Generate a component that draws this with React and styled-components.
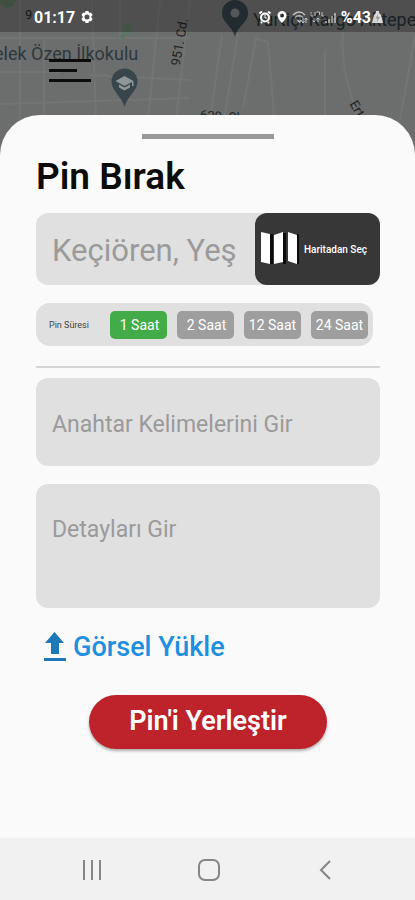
import React, { useState } from 'react';
import styled, { createGlobalStyle } from 'styled-components';

const GlobalStyle = createGlobalStyle`
  * {
    box-sizing: border-box;
  }

  body {
    margin: 0;
    background: #fafafa;
    font-family: Roboto, 'Noto Sans', sans-serif;
  }

  button,
  input,
  textarea {
    font-family: inherit;
  }

  button {
    border: 0;
    padding: 0;
    background: none;
    cursor: pointer;
  }
`;

const Screen = styled.div`
  display: flex;
  flex-direction: column;
  min-height: 100vh;
`;

const MapHeader = styled.header`
  position: relative;
  height: 160px;
  margin-bottom: -45px;
  overflow: hidden;
  background: #6c6e6d;
`;

const MapDrawing = styled.svg`
  position: absolute;
  top: 0;
  left: 0;
`;

const MapLabel = styled.span`
  position: absolute;
  top: ${(props) => props.$y}px;
  left: ${(props) => props.$x}px;
  color: ${(props) => props.$color || '#202224'};
  font-size: ${(props) => props.$size || 13}px;
  line-height: 20px;
  white-space: nowrap;
  transform: rotate(${(props) => props.$angle || 0}deg);
`;

const StatusBar = styled.div`
  position: relative;
  display: flex;
  align-items: center;
  justify-content: space-between;
  height: 32px;
  padding: 2px 32px 0 34px;
  background: rgba(0, 0, 0, 0.28);
  color: #fff;
  font-size: 16px;
  font-weight: 700;
`;

const StatusGroup = styled.div`
  display: flex;
  align-items: center;
  gap: ${(props) => props.$gap}px;
`;

const MenuButton = styled.button`
  position: relative;
  display: flex;
  flex-direction: column;
  gap: 7px;
  width: 42px;
  margin: 27px 0 0 49px;
`;

const MenuLine = styled.span`
  height: 3px;
  width: ${(props) => (props.$short ? '28px' : '100%')};
  background: #0c0c0c;
`;

const Sheet = styled.main`
  position: relative;
  flex: 1;
  display: flex;
  flex-direction: column;
  padding: 19px 35px 32px 36px;
  border-radius: 40px 40px 0 0;
  background: #fafafa;
`;

const Handle = styled.div`
  align-self: center;
  width: 132px;
  height: 5px;
  background: #999;
`;

const Title = styled.h1`
  margin: 16px 0 14px;
  color: #0c0c0c;
  font-size: 37px;
  font-weight: 600;
  line-height: 44px;
`;

const Location = styled.div`
  display: flex;
  height: 72px;
  border-radius: 12px;
  background: #e0e0e0;
`;

const LocationInput = styled.input`
  flex: 1;
  min-width: 0;
  padding: 2px 16px 0;
  border: 0;
  background: none;
  color: #222;
  font-size: 31px;

  &::placeholder {
    color: #9a9a9a;
    opacity: 1;
  }
`;

const MapButton = styled.button`
  display: flex;
  align-items: center;
  gap: 4px;
  width: 125px;
  padding-left: 5px;
  border-radius: 12px;
  background: #373737;
  color: #fff;
  font-size: 10px;
  font-weight: 500;
  white-space: nowrap;
`;

const Duration = styled.div`
  display: flex;
  align-items: center;
  gap: 10px;
  height: 43px;
  margin: 18px 7px 20px 0;
  padding: 0 5px 0 13px;
  border-radius: 14px;
  background: #e0e0e0;
`;

const DurationLabel = styled.span`
  flex: 1;
  color: #444;
  font-size: 9px;
  white-space: nowrap;
`;

const Chip = styled.button`
  width: 57px;
  height: 28px;
  padding-left: ${(props) => (props.$indent ? 2 : 0)}px;
  border-radius: 5px;
  background: ${(props) => (props.$active ? '#43ac48' : '#9e9e9e')};
  color: #fff;
  font-size: 14px;
  white-space: nowrap;
`;

const Divider = styled.hr`
  width: 100%;
  height: 2px;
  margin: 0 0 10px;
  border: 0;
  background: #d6d6d6;
`;

const fieldStyles = `
  display: block;
  width: 100%;
  border: 0;
  border-radius: 12px;
  background: #e0e0e0;
  color: #222;
  font-size: 23px;

  &::placeholder {
    color: #9a9a9a;
    opacity: 1;
  }
`;

const KeywordsInput = styled.input`
  ${fieldStyles}
  height: 88px;
  margin-bottom: 18px;
  padding: 4px 16px 0;
`;

const DetailsInput = styled.textarea`
  ${fieldStyles}
  height: 124px;
  padding: 32px 16px;
  line-height: 28px;
  resize: none;
`;

const UploadButton = styled.button`
  display: flex;
  align-items: center;
  align-self: flex-start;
  gap: 6px;
  margin: 21px 0 30px 7px;
  color: #1e8fe1;
  font-size: 27px;
  font-weight: 500;
  line-height: 36px;
`;

const SubmitButton = styled.button`
  align-self: center;
  height: 54px;
  padding: 0 40px 2px;
  border-radius: 27px;
  background: #be222b;
  box-shadow: 0 2px 3px rgba(0, 0, 0, 0.3);
  color: #fff;
  font-size: 27px;
  font-weight: 600;
`;

const NavBar = styled.nav`
  display: flex;
  align-items: center;
  justify-content: space-between;
  height: 62px;
  padding: 2px 76px 0 78px;
  background: #f1f1f1;
`;

const NavButton = styled.button`
  display: flex;
  align-items: center;
  justify-content: center;
  width: 28px;
  height: 28px;
`;

const durations = [1, 2, 12, 24];

function MapBackground() {
  return (
    <MapDrawing width="100%" height="160" aria-hidden="true">
      <g fill="none" stroke="#737574" strokeWidth="2">
        <path d="M20 0V120M44 40V120M92 0L96 120M120 0V40M160 0L148 120M190 0L176 120" />
        <path d="M0 38H190M0 72H60M90 75L190 80M0 104L190 98" />
        <path d="M222 34L210 120M238 34L224 120M256 38L243 108M255 38L268 42L274 115M325 50V120M343 32C340 70 352 94 358 120M415 36L400 120" />
      </g>
      <path d="M119 26l14-4-2 14-3-3-5 7-4-3 5-7z" fill="#5d7563" />
      <path d="M0 0h16l-3 6-7 2-6-3z" fill="#58705e" />
      <path
        d="M124.500 107C121 95 111.500 91 111.500 81.500a13 13 0 0 1 26 0C137.500 91 128 95 124.500 107z"
        fill="#38464b"
      />
      <path d="M115.500 81l9-5 9 5v5h-1.500v-4l-7.500 4z" fill="#8f9796" />
      <path d="M119 84.500l5.500 3 5.500-3v3l-5.500 3-5.500-3z" fill="#8f9796" />
      <path
        d="M235 37C232 25 222 23 222 13a13 13 0 0 1 26 0C248 23 238 25 235 37z"
        fill="#303c42"
      />
      <circle cx="235" cy="13" r="4.500" fill="#767978" />
    </MapDrawing>
  );
}

function GearIcon() {
  return (
    <svg width="12" height="12" viewBox="0 0 24 24" fill="#fff">
      <path
        fillRule="evenodd"
        d="M9 0h6l1 4 4-1 3 5-3 4 3 4-3 5-4-1-1 4H9l-1-4-4 1-3-5 3-4-3-4 3-5 4 1zM12 7a5 5 0 1 0 0 10 5 5 0 0 0 0-10z"
      />
    </svg>
  );
}

function StatusIcons() {
  return (
    <svg width="78" height="14" viewBox="0 0 78 14" fill="none" stroke="#fff">
      <circle cx="7" cy="7.500" r="4" strokeWidth="2" />
      <path d="M1.500 3.500L4 1.500M12.500 3.500L10 1.500M3 13l1-1M11 13l-1-1" strokeWidth="2" />
      <path d="M7 5v3h2" />
      <path
        d="M24 1a4.500 4.500 0 0 0-4.500 4.500C19.500 8.500 24 13 24 13s4.500-4.500 4.500-7.500A4.500 4.500 0 0 0 24 1zm0 2.500a2 2 0 1 1 0 4 2 2 0 0 1 0-4z"
        fill="#fff"
        fillRule="evenodd"
        stroke="none"
      />
      <g opacity="0.650">
        <path d="M35 5c4-4 8-4 12 0M37 7.500c3-2.500 5-2.500 8 0M39.500 10l2 2 2-2" strokeWidth="1.500" />
        <path d="M45 8v5M43.500 11l1.500 2 1.500-2M48 13V8M46.500 10L48 8l1.500 2" />
        <path d="M53 2v4h2M57 2v4M58.500 2h3v3M64 2v4h2" />
        <path d="M56 8v4M54.500 10.500L56 12l1.500-1.500M60 12V8M58.500 9.500L60 8l1.500 1.500" />
        <path d="M68 11v2M71 9v4M74 6v7M77 3v10" strokeWidth="1.500" />
      </g>
    </svg>
  );
}

function BatteryIcon() {
  return (
    <svg width="11" height="13" viewBox="0 0 11 13">
      <path d="M4 0h3v2l2 2 2 8H0l2-8 2-2z" fill="#fff" fillOpacity="0.800" />
      <path d="M6 3L3.500 7.500h2L5 11l3-5H6z" fill="#999" />
    </svg>
  );
}

function FoldedMapIcon() {
  return (
    <svg width="40" height="36" viewBox="0 0 40 36">
      <path d="M10 3h3v30h-3zM23 2h3v31h-3zM37 3h2v30h-2z" fill="#0c0c0c" />
      <path d="M1 1l9 2v30l-9-2zM14 4l9-3v30l-9 2zM28 1l9 3v29l-9-3z" fill="#fff" />
    </svg>
  );
}

function UploadIcon() {
  return (
    <svg width="24" height="30" viewBox="0 0 24 30" fill="#1c78b8">
      <path d="M11.500 0L21 11h-5v11H8V11H2z" />
      <path d="M1 26h22v3H1z" />
    </svg>
  );
}

function App() {
  const [duration, setDuration] = useState(1);

  return (
    <Screen>
      <GlobalStyle />
      <MapHeader>
        <MapBackground />
        <MapLabel $x={25} $y={5}>9</MapLabel>
        <MapLabel $x={-6} $y={44} $size={18} $color="#2e383d">elek Özen İlkokulu</MapLabel>
        <MapLabel $x={253} $y={10} $size={18} $color="#262e32">Yurtiçi Kargo Aktepe</MapLabel>
        <MapLabel $x={156} $y={32} $angle={-80}>951. Cd.</MapLabel>
        <MapLabel $x={200} $y={107} $angle={4}>629. Sk.</MapLabel>
        <MapLabel $x={345} $y={105} $angle={60}>Ertuğ</MapLabel>
        <StatusBar>
          <StatusGroup $gap={6}>
            01:17
            <GearIcon />
          </StatusGroup>
          <StatusGroup $gap={5}>
            <StatusIcons />
            <StatusGroup $gap={1}>
              %43
              <BatteryIcon />
            </StatusGroup>
          </StatusGroup>
        </StatusBar>
        <MenuButton aria-label="Menü">
          <MenuLine />
          <MenuLine $short />
          <MenuLine />
        </MenuButton>
      </MapHeader>

      <Sheet>
        <Handle />
        <Title>Pin Bırak</Title>
        <Location>
          <LocationInput type="text" aria-label="Konum" placeholder="Keçiören, Yeş" />
          <MapButton>
            <FoldedMapIcon />
            Haritadan Seç
          </MapButton>
        </Location>
        <Duration role="group" aria-labelledby="duration">
          <DurationLabel id="duration">Pin Süresi</DurationLabel>
          {durations.map((hours) => (
            <Chip
              key={hours}
              $active={hours === duration}
              $indent={hours < 10}
              aria-pressed={hours === duration}
              onClick={() => setDuration(hours)}
            >
              {hours} Saat
            </Chip>
          ))}
        </Duration>
        <Divider />
        <KeywordsInput
          type="text"
          aria-label="Anahtar Kelimeler"
          placeholder="Anahtar Kelimelerini Gir"
        />
        <DetailsInput aria-label="Detaylar" placeholder="Detayları Gir" />
        <UploadButton>
          <UploadIcon />
          Görsel Yükle
        </UploadButton>
        <SubmitButton>Pin'i Yerleştir</SubmitButton>
      </Sheet>

      <NavBar>
        <NavButton aria-label="Son uygulamalar">
          <svg width="20" height="20" fill="none" stroke="#858585" strokeWidth="2">
            <path d="M2 0v20M10 0v20M18 0v20" />
          </svg>
        </NavButton>
        <NavButton aria-label="Ana ekran">
          <svg width="22" height="22" fill="none" stroke="#858585" strokeWidth="2">
            <rect x="1" y="1" width="20" height="20" rx="6" />
          </svg>
        </NavButton>
        <NavButton aria-label="Geri">
          <svg width="12" height="20" fill="none" stroke="#858585" strokeWidth="2">
            <path d="M11 1L2 10l9 9" />
          </svg>
        </NavButton>
      </NavBar>
    </Screen>
  );
}

export default App;
